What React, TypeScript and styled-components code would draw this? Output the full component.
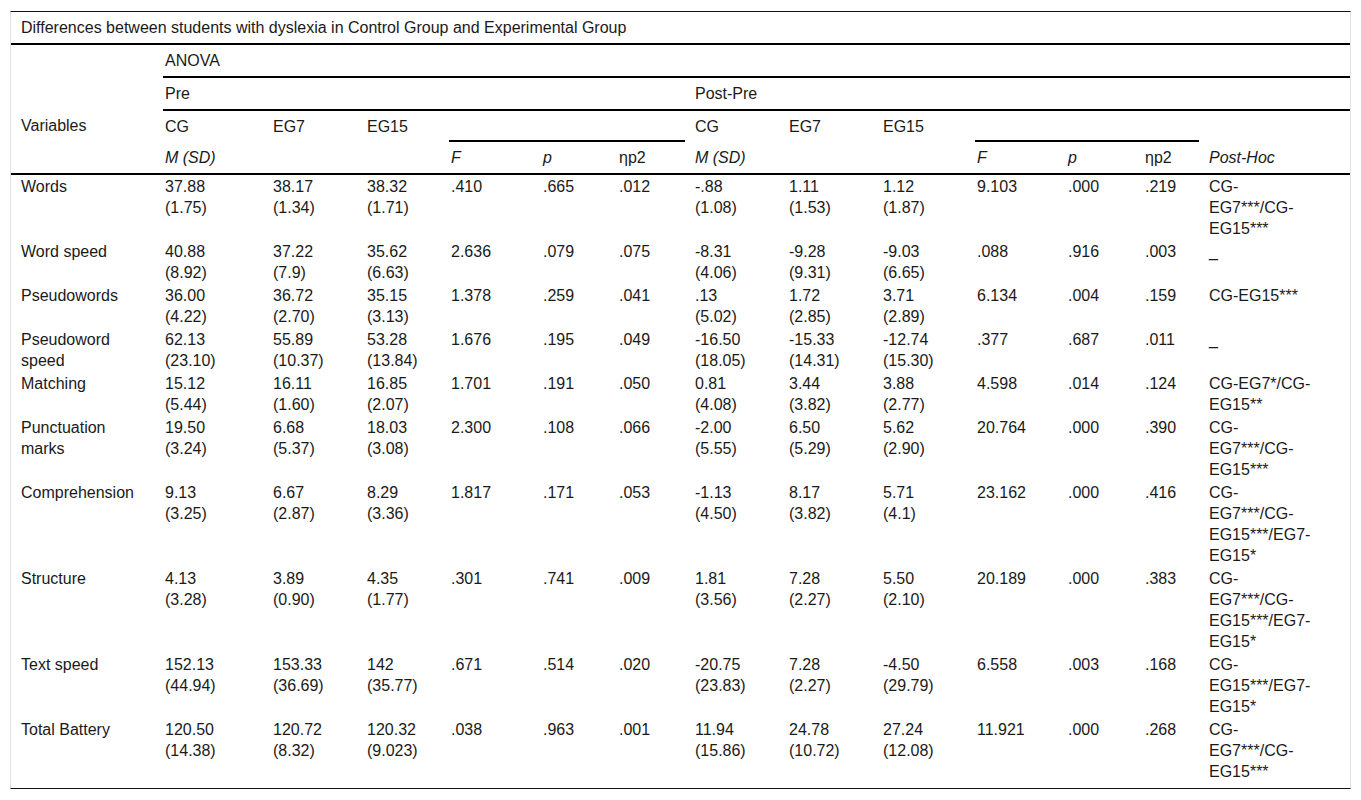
import React from 'react';
import styled, { createGlobalStyle } from 'styled-components';

const GlobalStyle = createGlobalStyle`
  body {
    margin: 0;
    background: #fff;
    font-family: 'Liberation Sans', Arial, sans-serif;
    color: #1a1a1a;
  }
`;

type Row = {
  label: string;
  pre: [string, string][];
  preStats: string[];
  post: [string, string][];
  postStats: string[];
  postHoc: string;
};

const ROWS: Row[] = [
  {
    label: 'Words',
    pre: [['37.88', '(1.75)'], ['38.17', '(1.34)'], ['38.32', '(1.71)']],
    preStats: ['.410', '.665', '.012'],
    post: [['-.88', '(1.08)'], ['1.11', '(1.53)'], ['1.12', '(1.87)']],
    postStats: ['9.103', '.000', '.219'],
    postHoc: 'CG-EG7***/CG-EG15***',
  },
  {
    label: 'Word speed',
    pre: [['40.88', '(8.92)'], ['37.22', '(7.9)'], ['35.62', '(6.63)']],
    preStats: ['2.636', '.079', '.075'],
    post: [['-8.31', '(4.06)'], ['-9.28', '(9.31)'], ['-9.03', '(6.65)']],
    postStats: ['.088', '.916', '.003'],
    postHoc: '_',
  },
  {
    label: 'Pseudowords',
    pre: [['36.00', '(4.22)'], ['36.72', '(2.70)'], ['35.15', '(3.13)']],
    preStats: ['1.378', '.259', '.041'],
    post: [['.13', '(5.02)'], ['1.72', '(2.85)'], ['3.71', '(2.89)']],
    postStats: ['6.134', '.004', '.159'],
    postHoc: 'CG-EG15***',
  },
  {
    label: 'Pseudoword speed',
    pre: [['62.13', '(23.10)'], ['55.89', '(10.37)'], ['53.28', '(13.84)']],
    preStats: ['1.676', '.195', '.049'],
    post: [['-16.50', '(18.05)'], ['-15.33', '(14.31)'], ['-12.74', '(15.30)']],
    postStats: ['.377', '.687', '.011'],
    postHoc: '_',
  },
  {
    label: 'Matching',
    pre: [['15.12', '(5.44)'], ['16.11', '(1.60)'], ['16.85', '(2.07)']],
    preStats: ['1.701', '.191', '.050'],
    post: [['0.81', '(4.08)'], ['3.44', '(3.82)'], ['3.88', '(2.77)']],
    postStats: ['4.598', '.014', '.124'],
    postHoc: 'CG-EG7*/CG-EG15**',
  },
  {
    label: 'Punctuation marks',
    pre: [['19.50', '(3.24)'], ['6.68', '(5.37)'], ['18.03', '(3.08)']],
    preStats: ['2.300', '.108', '.066'],
    post: [['-2.00', '(5.55)'], ['6.50', '(5.29)'], ['5.62', '(2.90)']],
    postStats: ['20.764', '.000', '.390'],
    postHoc: 'CG-EG7***/CG-EG15***',
  },
  {
    label: 'Comprehension',
    pre: [['9.13', '(3.25)'], ['6.67', '(2.87)'], ['8.29', '(3.36)']],
    preStats: ['1.817', '.171', '.053'],
    post: [['-1.13', '(4.50)'], ['8.17', '(3.82)'], ['5.71', '(4.1)']],
    postStats: ['23.162', '.000', '.416'],
    postHoc: 'CG-EG7***/CG-EG15***/EG7-EG15*',
  },
  {
    label: 'Structure',
    pre: [['4.13', '(3.28)'], ['3.89', '(0.90)'], ['4.35', '(1.77)']],
    preStats: ['.301', '.741', '.009'],
    post: [['1.81', '(3.56)'], ['7.28', '(2.27)'], ['5.50', '(2.10)']],
    postStats: ['20.189', '.000', '.383'],
    postHoc: 'CG-EG7***/CG-EG15***/EG7-EG15*',
  },
  {
    label: 'Text speed',
    pre: [['152.13', '(44.94)'], ['153.33', '(36.69)'], ['142', '(35.77)']],
    preStats: ['.671', '.514', '.020'],
    post: [['-20.75', '(23.83)'], ['7.28', '(2.27)'], ['-4.50', '(29.79)']],
    postStats: ['6.558', '.003', '.168'],
    postHoc: 'CG-EG15***/EG7-EG15*',
  },
  {
    label: 'Total Battery',
    pre: [['120.50', '(14.38)'], ['120.72', '(8.32)'], ['120.32', '(9.023)']],
    preStats: ['.038', '.963', '.001'],
    post: [['11.94', '(15.86)'], ['24.78', '(10.72)'], ['27.24', '(12.08)']],
    postStats: ['11.921', '.000', '.268'],
    postHoc: 'CG-EG7***/CG-EG15***',
  },
];

const COLS = [152, 108, 94, 84, 92, 76, 76, 94, 94, 94, 91, 77, 64, 143];

const App = () => {
  return (
    <>
      <GlobalStyle />
      <Frame>
        <Table>
          <colgroup>
            {COLS.map((w, i) => (
              <col key={i} style={{ width: w }} />
            ))}
          </colgroup>
          <thead>
            <tr>
              <Caption colSpan={14}>
                Differences between students with dyslexia in Control Group and Experimental Group
              </Caption>
            </tr>
            <tr>
              <Head />
              <Head colSpan={13} $ruled>
                ANOVA
              </Head>
            </tr>
            <tr>
              <Head rowSpan={3} $first $ruled $thick>
                Variables
              </Head>
              <Head colSpan={6} $ruled>
                Pre
              </Head>
              <Head colSpan={7} $ruled>
                Post-Pre
              </Head>
            </tr>
            <tr>
              <Head>CG</Head>
              <Head>EG7</Head>
              <Head>EG15</Head>
              <RuleCell colSpan={3}>
                <Rule />
              </RuleCell>
              <Head>CG</Head>
              <Head>EG7</Head>
              <Head>EG15</Head>
              <RuleCell colSpan={3}>
                <Rule />
              </RuleCell>
              <Head />
            </tr>
            <tr>
              <Head colSpan={3} $ruled $thick $italic>
                M (SD)
              </Head>
              <Head $ruled $thick $italic>
                F
              </Head>
              <Head $ruled $thick $italic>
                p
              </Head>
              <Head $ruled $thick>
                ηp2
              </Head>
              <Head colSpan={3} $ruled $thick $italic>
                M (SD)
              </Head>
              <Head $ruled $thick $italic>
                F
              </Head>
              <Head $ruled $thick $italic>
                p
              </Head>
              <Head $ruled $thick>
                ηp2
              </Head>
              <Head $ruled $thick $italic>
                Post-Hoc
              </Head>
            </tr>
          </thead>
          <tbody>
            {ROWS.map((row) => (
              <tr key={row.label}>
                <Cell $first>{row.label}</Cell>
                {row.pre.map(([m, sd], i) => (
                  <Cell key={'pre' + i}>
                    {m}
                    <br />
                    {sd}
                  </Cell>
                ))}
                {row.preStats.map((v, i) => (
                  <Cell key={'ps' + i}>{v}</Cell>
                ))}
                {row.post.map(([m, sd], i) => (
                  <Cell key={'post' + i}>
                    {m}
                    <br />
                    {sd}
                  </Cell>
                ))}
                {row.postStats.map((v, i) => (
                  <Cell key={'pos' + i}>{v}</Cell>
                ))}
                <Cell $last>{row.postHoc}</Cell>
              </tr>
            ))}
          </tbody>
        </Table>
      </Frame>
    </>
  );
};

export default App;

const Frame = styled.div`
  margin: 11px 10px 0 10px;
  border-top: 1px solid #111;
  border-bottom: 1px solid #111;
  border-left: 1px solid #e4e4e4;
  border-right: 1px solid #e4e4e4;
  padding-bottom: 5px;
`;

const Table = styled.table`
  width: 1339px;
  table-layout: fixed;
  border-collapse: collapse;
  font-size: 16px;
  line-height: 21px;
`;

const Caption = styled.th`
  text-align: left;
  font-weight: normal;
  padding: 5px 8px 5px 10px;
  border-bottom: 2px solid #000;
`;

const Head = styled.th<{
  $ruled?: boolean;
  $thick?: boolean;
  $italic?: boolean;
  $first?: boolean;
}>`
  text-align: left;
  font-weight: normal;
  font-style: ${(p) => (p.$italic ? 'italic' : 'normal')};
  padding: ${(p) => (p.$first ? '5px 20px 5px 10px' : '5px 8px 5px 2px')};
  vertical-align: middle;
  border-bottom: ${(p) => (p.$ruled ? '2px solid #000' : 'none')};
`;

const RuleCell = styled.th`
  padding: 0 8px 0 0;
  vertical-align: bottom;
`;

const Rule = styled.div`
  border-top: 2px solid #000;
`;

const Cell = styled.td<{ $first?: boolean; $last?: boolean }>`
  vertical-align: top;
  padding: ${(p) =>
    p.$first ? '1px 20px 1px 10px' : p.$last ? '1px 34px 1px 2px' : '1px 8px 1px 2px'};
`;
